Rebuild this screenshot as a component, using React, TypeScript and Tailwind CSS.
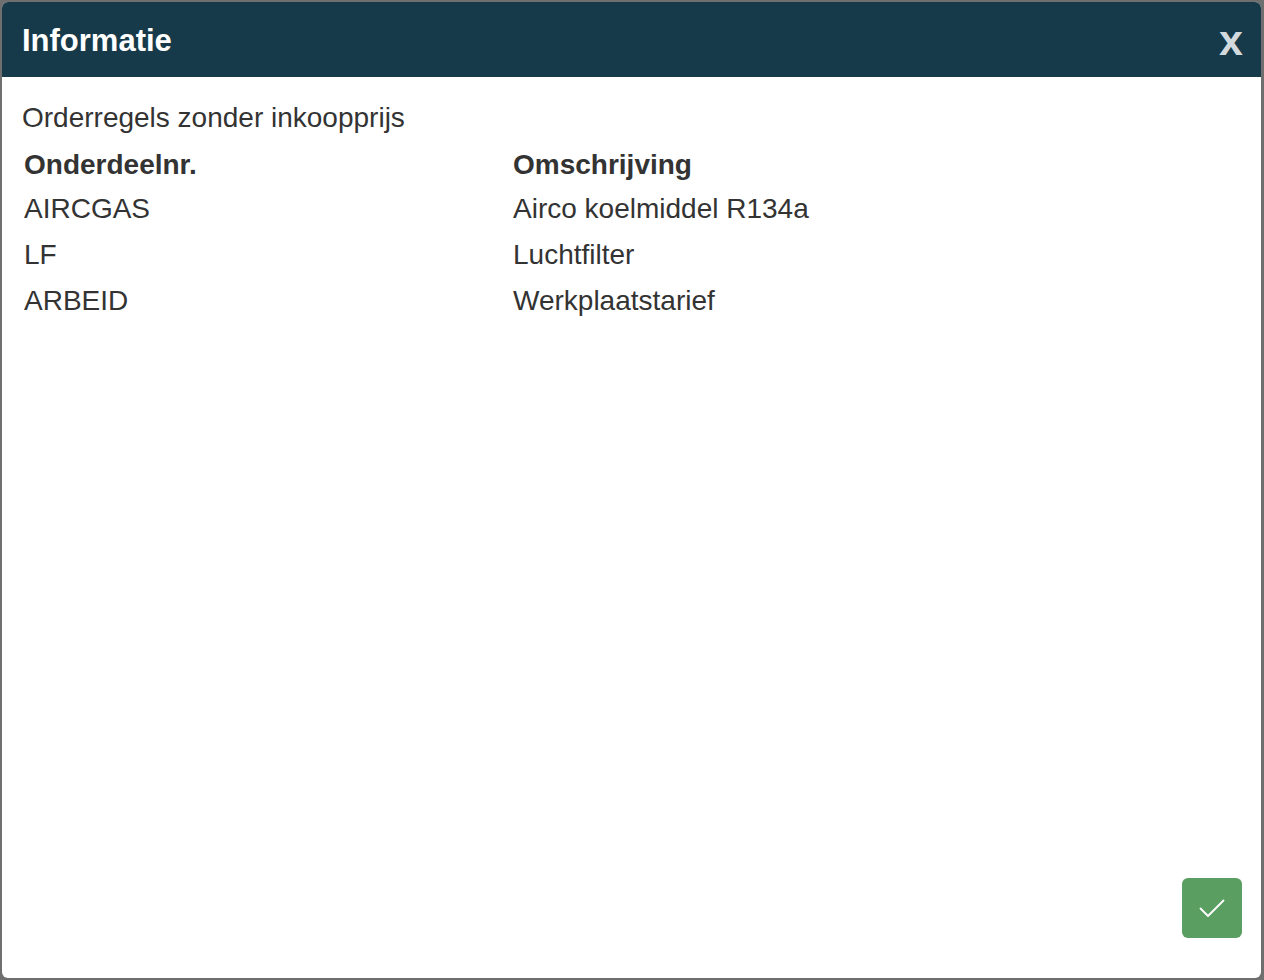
import React from 'react';

const rows = [
  { part: 'AIRCGAS', desc: 'Airco koelmiddel R134a' },
  { part: 'LF', desc: 'Luchtfilter' },
  { part: 'ARBEID', desc: 'Werkplaatstarief' },
];

export default function App() {
  return (
    <div className="h-[980px] w-full bg-[#6f6f6f] pl-[2px] pt-[2px] pr-[3px] pb-[2px] font-[family-name:Liberation_Sans,Arial,sans-serif]">
      <div className="flex h-full flex-col overflow-hidden rounded-[6px] bg-white">
        {/* Header */}
        <div className="flex h-[75px] shrink-0 items-center justify-between bg-[#173a4a] pl-[20px] pr-[18px]">
          <h1 className="mt-[4px] text-[31px] font-bold text-white">Informatie</h1>
          <button className="mt-[2px] text-[43px] leading-none font-bold text-[#d3dade]">x</button>
        </div>

        {/* Body */}
        <div className="flex flex-1 flex-col px-[20px] pt-[25px] pb-[40px]">
          <p className="text-[28px] leading-[32px] text-[#333]">Orderregels zonder inkoopprijs</p>
          <div className="mt-[15px] grid grid-cols-[489px_1fr] pl-[2px] text-[28px] text-[#333]">
            <div className="mb-[-2px] font-bold leading-[32px]">Onderdeelnr.</div>
            <div className="mb-[-2px] font-bold leading-[32px]">Omschrijving</div>
            {rows.map((r) => (
              <React.Fragment key={r.part}>
                <div className="mt-[14px] leading-[32px]">{r.part}</div>
                <div className="mt-[14px] leading-[32px]">{r.desc}</div>
              </React.Fragment>
            ))}
          </div>

          <div className="mt-auto flex justify-end">
            <button className="mr-[-1px] flex h-[60px] w-[60px] items-center justify-center rounded-[6px] bg-[#5a9e62]">
              <svg width="26" height="20" viewBox="0 0 26 20" fill="none" stroke="white" strokeWidth="1.8" strokeLinecap="round" strokeLinejoin="round">
                <path d="M1.5 10.5 L9 18 L24.5 2.5" />
              </svg>
            </button>
          </div>
        </div>
      </div>
    </div>
  );
}
